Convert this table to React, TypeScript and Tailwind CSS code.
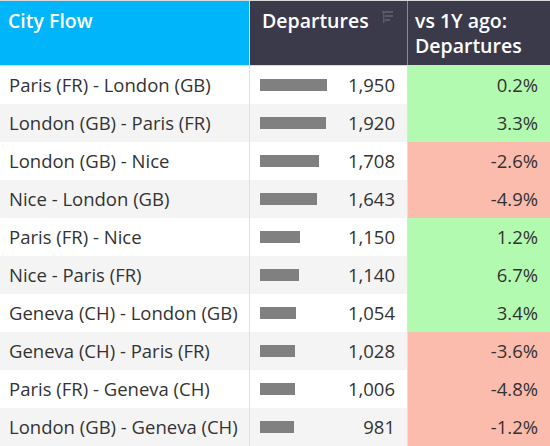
import React from "react";

const rows = [
  { name: "Paris (FR) - London (GB)", v: 1950, p: "0.2%", up: true },
  { name: "London (GB) - Paris (FR)", v: 1920, p: "3.3%", up: true },
  { name: "London (GB) - Nice", v: 1708, p: "-2.6%", up: false },
  { name: "Nice - London (GB)", v: 1643, p: "-4.9%", up: false },
  { name: "Paris (FR) - Nice", v: 1150, p: "1.2%", up: true },
  { name: "Nice - Paris (FR)", v: 1140, p: "6.7%", up: true },
  { name: "Geneva (CH) - London (GB)", v: 1054, p: "3.4%", up: true },
  { name: "Geneva (CH) - Paris (FR)", v: 1028, p: "-3.6%", up: false },
  { name: "Paris (FR) - Geneva (CH)", v: 1006, p: "-4.8%", up: false },
  { name: "London (GB) - Geneva (CH)", v: 981, p: "-1.2%", up: false },
];

function SortIcon() {
  return (
    <svg width="11" height="14" viewBox="0 0 11 14" fill="none" className="text-[#5a5968]">
      <rect x="0" y="1" width="11" height="2" fill="currentColor" />
      <rect x="3" y="5" width="8" height="2" fill="currentColor" />
      <rect x="3" y="9" width="5" height="2" fill="currentColor" />
      <rect x="1" y="3" width="1.5" height="10" fill="currentColor" />
    </svg>
  );
}

export default function App() {
  return (
    <div
      className="w-[550px] h-[446px] overflow-hidden bg-white text-[#333333]"
      style={{ fontFamily: '"Open Sans", "Noto Sans", sans-serif' }}
    >
      <div className="grid grid-cols-[250px_158px_142px] h-[66px] border-t border-b border-[#d9d9d9] text-white text-[19.5px] font-semibold leading-[25px]">
        <div className="bg-[#00b5f9] border-r border-[#d9d9d9] pl-[8px] pt-[7px]">City Flow</div>
        <div className="bg-[#3b3a4a] border-r border-[#8a8996] pl-[12px] pr-[14px] pt-[7px] flex justify-between items-start">
          <span>Departures</span>
          <span className="pt-[2px]"><SortIcon /></span>
        </div>
        <div className="bg-[#3b3a4a] pl-[7px] pt-[7px]">
          <div>vs 1Y ago:</div>
          <div>Departures</div>
        </div>
      </div>
      {rows.map((r, i) => (
        <div
          key={i}
          className={`grid grid-cols-[250px_158px_142px] h-[38px] text-[18.5px] ${i % 2 === 1 ? "bg-[#f4f4f4]" : "bg-white"}`}
        >
          <div className="border-r border-[#e0e0e0] pl-[9px] flex items-center whitespace-nowrap">{r.name}</div>
          <div className="border-r border-[#e0e0e0] pl-[10px] pr-[12px] flex items-center justify-between">
            <div className="h-[12px] bg-[#808080]" style={{ width: `${Math.round(r.v * 0.0344)}px` }} />
            <span>{r.v.toLocaleString("en-US")}</span>
          </div>
          <div className={`${r.up ? "bg-[#b3fab1]" : "bg-[#fbbcad]"} pr-[12px] flex items-center justify-end`}>
            {r.p}
          </div>
        </div>
      ))}
    </div>
  );
}
